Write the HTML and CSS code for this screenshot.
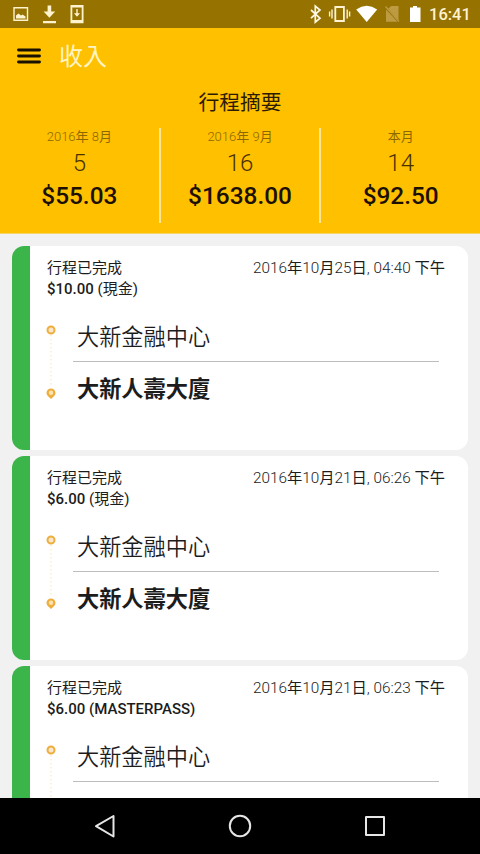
FILE: index.html
```html
<!DOCTYPE html>
<html lang="zh-Hant">
<head>
<meta charset="utf-8">
<title>收入</title>
<link rel="stylesheet" href="styles.css">
</head>
<body>
<div class="screen">
  <div class="status">
    <svg class="status-left" width="100" height="28" viewBox="0 0 100 28">
      <path d="M14 7.700h13.500v12.600H14z" fill="none" stroke="#fff3cf" stroke-width="1.400"/>
      <path d="M16 18.500v-3l2.500-2 2.500 2 1.500-1 3 2v2z" fill="#fff3cf"/>
      <path d="M47.600 5.500h3.600v6h4l-5.800 6.200-5.800-6.200h4zM43 21h13v2.200H43z" fill="#fff3cf"/>
      <path d="M70.500 5h13v18.300h-13zM72.300 7.500v12.500h9.400V7.500z" fill="#fff3cf" fill-rule="evenodd"/>
      <path d="M76.300 9h1.400v4.200h2.300l-3 3.500-3-3.500h2.300z" fill="#fff3cf"/>
    </svg>
    <svg class="status-right" width="126" height="28" viewBox="300 0 126 28">
      <path d="M311 10l9 8.200-4.700 4V6l4.700 4-9 8.200" fill="none" stroke="#fff8e6" stroke-width="1.700"/>
      <path d="M335.300 7h8.600v14h-8.600z" fill="none" stroke="#fff3d4" stroke-width="1.800"/>
      <path d="M332 9.500v9M347.200 9.500v9M329.600 11.500v5M349.600 11.500v5" stroke="#fff3d4" stroke-width="1.400"/>
      <path d="M356.200 9.500Q366.700 2.200 377.200 9.500L366.700 22z" fill="#fff"/>
      <path d="M388.300 8.500l3-2.500h7.200v14.500zM386 9.500v12.200h11.500z" fill="#bd9b43"/>
      <path d="M385.500 6.500l13.500 15" stroke="#bd9b43" stroke-width="1.200"/>
      <path d="M410 7.500h3V6h4v1.500h3.500V22H410z" fill="#fff"/>
    </svg>
    <span class="clock">16:41</span>
  </div>
  <header class="header">
    <div class="bar">
      <svg width="24" height="16" viewBox="0 0 24 16"><path d="M1.500 2h21M1.500 8h21M1.500 14h21" stroke="#1a1000" stroke-width="2.900" stroke-linecap="round"/></svg>
      <h1 class="title">收入</h1>
    </div>
    <h2 class="summary-title">行程摘要</h2>
    <div class="summary">
      <div class="period"><span class="month">2016<b>年</b> 8<b>月</b></span><span class="count">5</span><span class="total">$55.03</span></div>
      <div class="period"><span class="month">2016<b>年</b> 9<b>月</b></span><span class="count">16</span><span class="total">$1638.00</span></div>
      <div class="period"><span class="month"><b>本月</b></span><span class="count">14</span><span class="total">$92.50</span></div>
    </div>
  </header>
  <main class="list">
    <article class="card">
      <div class="card-head"><span>行程已完成</span><time class="date">2016<b>年</b>10<b>月</b>25<b>日</b>, 04:40 <b>下午</b></time></div>
      <div class="fare">$10.00 <b>(現金)</b></div>
      <div class="route">
        <svg class="pins" width="12" height="76" viewBox="0 0 12 76"><path d="M6 11v50" stroke="#fae9c4" stroke-width="1.200" stroke-dasharray="1.500 2.500"/><circle cx="6" cy="6" r="3.500" fill="#fbe5cf" stroke="#eeae3c" stroke-width="2"/><path d="M1.500 69a4.500 4.500 0 0 1 9 0c0 2.500-2.500 4-4.500 6-2-2-4.500-3.500-4.500-6z" fill="#eeae3c"/><circle cx="6" cy="68.800" r="2.200" fill="#fbe3b5"/></svg>
        <div class="stops"><div class="from">大新金融中心</div><div class="to">大新人壽大廈</div></div>
      </div>
    </article>
    <article class="card">
      <div class="card-head"><span>行程已完成</span><time class="date">2016<b>年</b>10<b>月</b>21<b>日</b>, 06:26 <b>下午</b></time></div>
      <div class="fare">$6.00 <b>(現金)</b></div>
      <div class="route">
        <svg class="pins" width="12" height="76" viewBox="0 0 12 76"><path d="M6 11v50" stroke="#fae9c4" stroke-width="1.200" stroke-dasharray="1.500 2.500"/><circle cx="6" cy="6" r="3.500" fill="#fbe5cf" stroke="#eeae3c" stroke-width="2"/><path d="M1.500 69a4.500 4.500 0 0 1 9 0c0 2.500-2.500 4-4.500 6-2-2-4.500-3.500-4.500-6z" fill="#eeae3c"/><circle cx="6" cy="68.800" r="2.200" fill="#fbe3b5"/></svg>
        <div class="stops"><div class="from">大新金融中心</div><div class="to">大新人壽大廈</div></div>
      </div>
    </article>
    <article class="card">
      <div class="card-head"><span>行程已完成</span><time class="date">2016<b>年</b>10<b>月</b>21<b>日</b>, 06:23 <b>下午</b></time></div>
      <div class="fare">$6.00 (MASTERPASS)</div>
      <div class="route">
        <svg class="pins" width="12" height="76" viewBox="0 0 12 76"><path d="M6 11v50" stroke="#fae9c4" stroke-width="1.200" stroke-dasharray="1.500 2.500"/><circle cx="6" cy="6" r="3.500" fill="#fbe5cf" stroke="#eeae3c" stroke-width="2"/></svg>
        <div class="stops"><div class="from">大新金融中心</div></div>
      </div>
    </article>
  </main>
  <nav class="nav">
    <svg width="480" height="56" viewBox="0 0 480 56" fill="none" stroke="#e6e6e6" stroke-width="2" stroke-linejoin="round"><path d="M113.500 18v20.500L96 28.200z"/><circle cx="240" cy="28" r="10.200"/><path d="M366 19h18v18h-18z"/></svg>
  </nav>
</div>
</body>
</html>
```
FILE: styles.css
```css
* { box-sizing: border-box; }
body { margin: 0; background: #000; font-family: Roboto, "Noto Sans CJK TC", sans-serif; color: #1c1c1c; }
b { font-weight: 400; }
.screen { width: 480px; height: 854px; display: flex; flex-direction: column; overflow: hidden; background: #f1f1f1; }
svg { display: block; flex: none; }
.status { height: 28px; flex: none; display: flex; align-items: center; background: #967200; }
.status-right { margin-left: auto; }
.clock { width: 54px; padding: 1px 0 0 3px; font-size: 16.5px; font-weight: 500; line-height: 28px; color: #fff3d4; }
.header { height: 206px; flex: none; background: #ffc000; border-bottom: 1px solid #f7d46a; }
.bar { height: 56px; padding-left: 17px; display: flex; align-items: center; gap: 18px; }
.title { margin: 2px 0 0; font-size: 24px; font-weight: 400; line-height: 30px; color: #fff5c4; }
.summary-title { margin: 4px 0 0; font-size: 20.8px; font-weight: 400; line-height: 30px; text-align: center; color: #2b1b00; }
.summary { display: flex; height: 95px; margin-top: 10px; }
.period { flex: 1; display: flex; flex-direction: column; align-items: center; }
.period + .period { border-left: 2px solid #ffe596; }
.month { font-size: 13px; line-height: 18px; font-weight: 300; color: #8c6800; }
.count { margin-top: 2px; font-size: 24px; line-height: 30px; font-weight: 300; color: #4a3000; }
.total { margin-top: 4px; font-size: 24.4px; line-height: 28px; font-weight: 500; color: #1c1000; }
.list { flex: 1; min-height: 0; overflow: hidden; padding: 12px 12px 0; display: flex; flex-direction: column; gap: 6px; }
.card { height: 204px; flex: none; padding: 12px 23px 0 17px; background: #fff; border-left: 18px solid #3bb44a; border-radius: 12px; }
.card-head { display: flex; justify-content: space-between; font-size: 15px; line-height: 21px; }
.date { font-size: 15.3px; font-weight: 300; }
.fare { font-size: 15px; line-height: 21px; font-weight: 500; }
.route { display: flex; gap: 16px; margin-top: 24px; }
.pins { margin: 0 0 0 -2px; }
.stops { flex: 1; margin-right: 6px; }
.from { height: 38px; padding: 1px 0 0 4px; border-bottom: 1px solid #bdbdbd; font-size: 22.2px; line-height: 24px; font-weight: 350; }
.to { padding: 15px 0 0 4px; font-size: 22.2px; line-height: 24px; font-weight: 700; }
.nav { height: 56px; flex: none; background: #000; }
```
